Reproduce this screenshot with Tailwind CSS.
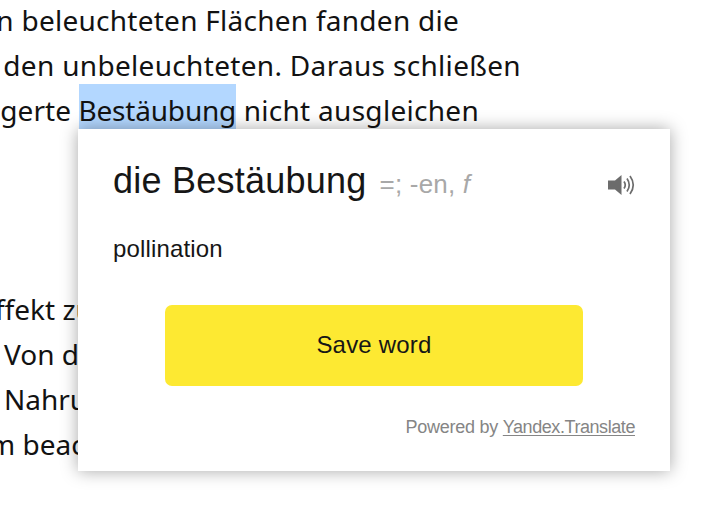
<!DOCTYPE html>
<html lang="de">
<head>
<meta charset="utf-8">
<title>Wörterbuch</title>
<script src="https://cdn.jsdelivr.net/npm/@tailwindcss/browser@4"></script>
</head>
<body class="bg-white">
<main class="relative w-[716px] h-[522px] overflow-hidden bg-white font-['Noto_Sans',sans-serif] text-[28px] leading-[45px] text-[#121212]">
  <div class="flex flex-col -mt-[2px] whitespace-nowrap">
    <p class="w-[459px] flex justify-end tracking-[0.26px]">n beleuchteten Flächen fanden die</p>
    <p class="w-[521px] flex justify-end tracking-[0.32px]">den unbeleuchteten. Daraus schließen</p>
    <p class="w-[479px] flex justify-end"><span><span class="tracking-[0.1px]">gerte </span><span class="bg-[#b3d7ff] pt-[7px] tracking-[-0.2px]">Bestäubung</span><span class="tracking-[0.29px]"> nicht ausgleichen</span></span></p>
  </div>
  <div class="flex flex-col items-start mt-[154px] whitespace-nowrap">
    <p class="-ml-[5px]">ffekt zu</p>
    <p class="ml-[4px]">Von d</p>
    <p class="ml-[4px]">Nahru</p>
    <p class="-ml-[11px]">m beac</p>
  </div>
  <section lang="en" class="absolute left-[78px] top-[129px] w-[592px] h-[342px] bg-white shadow-[0_0_16px_rgba(0,0,0,0.35)] pl-[35px] pr-[35px] flex flex-col font-['Liberation_Sans',sans-serif] text-[#161616]">
    <header class="flex items-center justify-between h-[42px] mt-[32px]">
      <h1 class="flex items-baseline whitespace-nowrap text-[36px] leading-[42px]"><span class="tracking-[0.24px]">die Bestäubung</span><span class="ml-[13px] text-[26px] tracking-[0.2px] text-[#a8a8a8]">=; -en, <i>f</i></span></h1>
      <svg class="w-[28px] h-[22px] mt-[6px]" viewBox="0 0 28 22" fill="none">
        <path d="M1 6.500h7l6.500-5.500v20L8 15.500H1z" fill="#6c6c6c"/>
        <path d="M17 7.500q2.500 3.500 0 7M20 4.500q4.500 6.500 0 13M23 2q6.500 9 0 18" stroke="#6c6c6c" stroke-width="1.700"/>
      </svg>
    </header>
    <p class="mt-[31px] text-[24px] leading-[30px] tracking-[0.15px]">pollination</p>
    <button class="self-center mt-[41px] w-[418px] h-[81px] pb-[2px] rounded-[7px] bg-[#fde932] text-[24px] tracking-[0.2px]">Save word</button>
    <footer class="mt-[29px] flex justify-end text-[18px] leading-[24px] tracking-[-0.25px] text-[#858585] whitespace-pre">Powered by <a class="tracking-[-0.43px] underline underline-offset-[2px] decoration-1">Yandex.Translate</a></footer>
  </section>
</main>
</body>
</html>
